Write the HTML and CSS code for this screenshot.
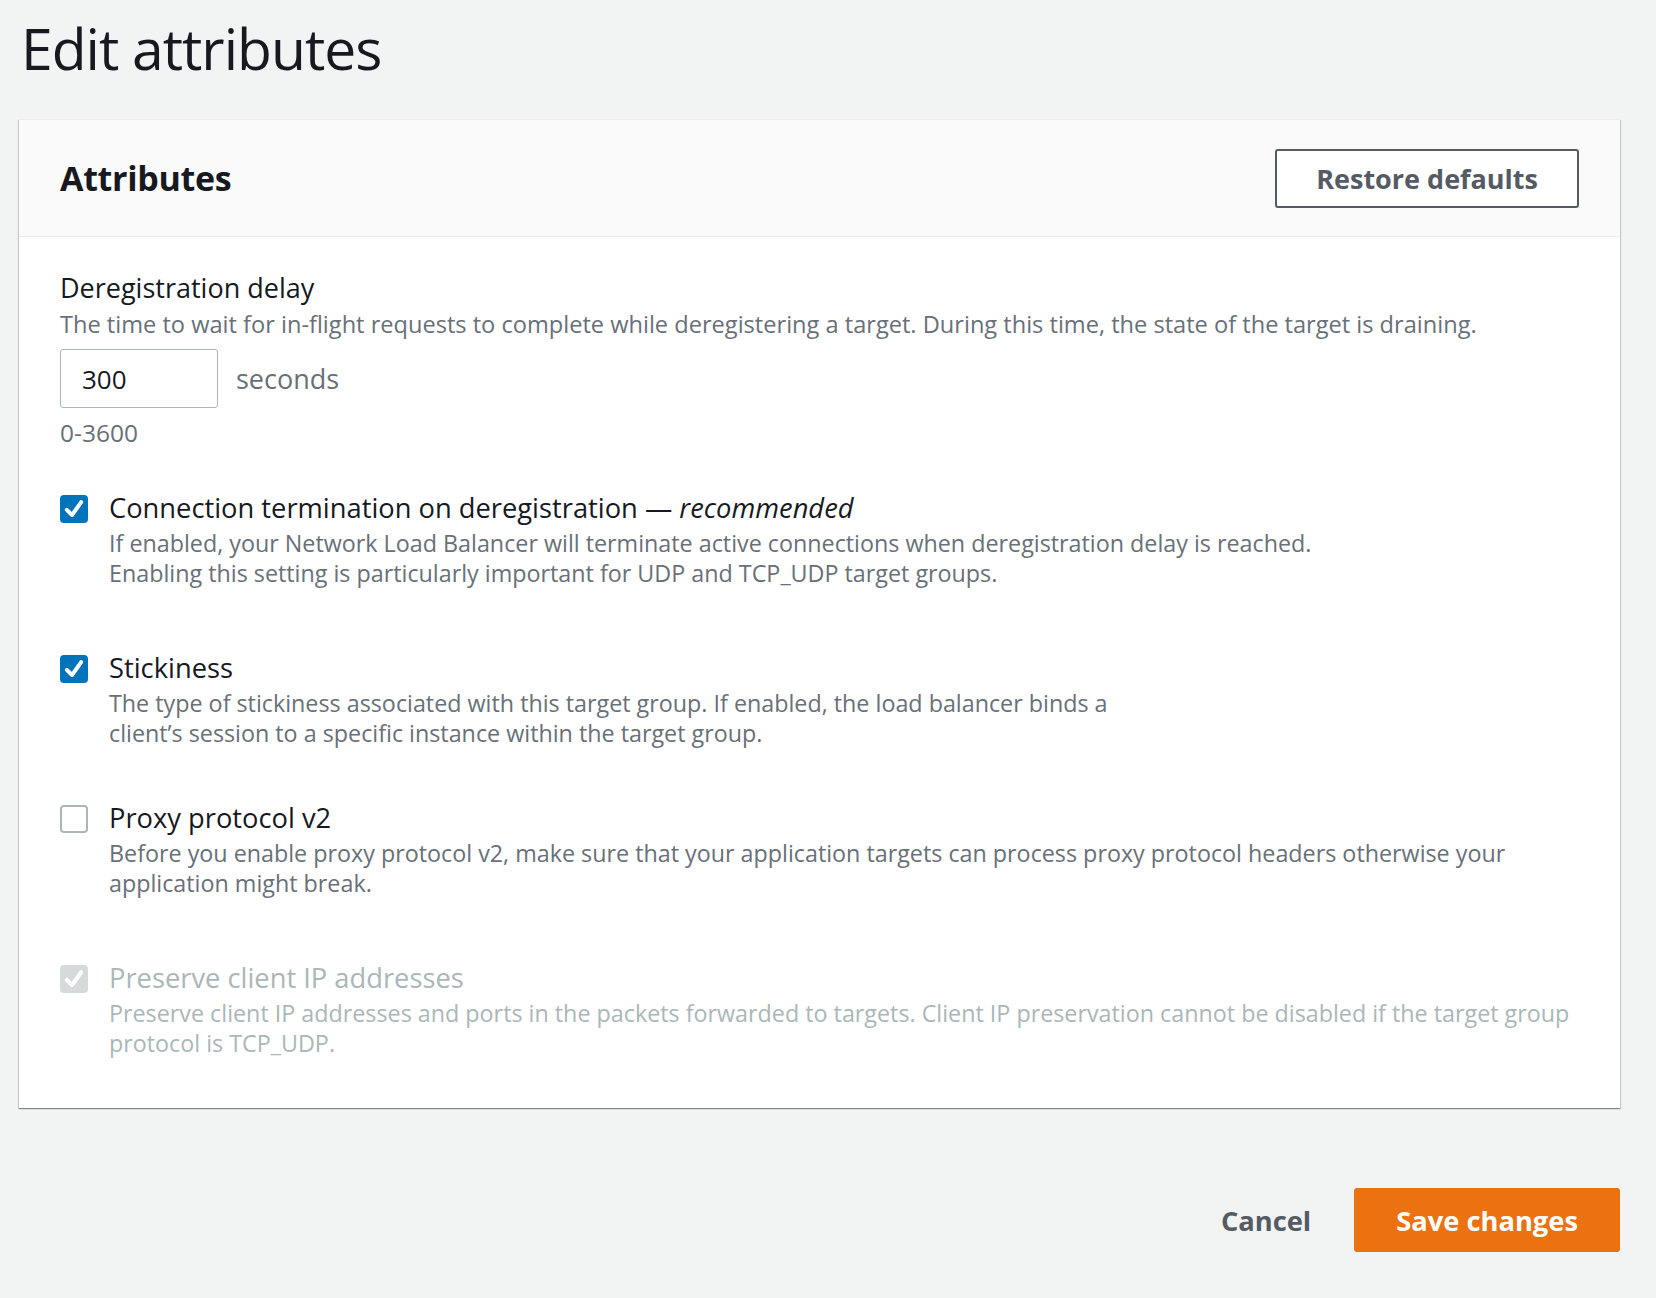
FILE: index.html
```html
<!DOCTYPE html>
<html>
<head>
  <title>Edit attributes</title>
  <link rel="stylesheet" href="styles.css">
</head>
<body>
  <div class="page">
    <h1>Edit attributes</h1>

    <div class="card">
      <div class="card-header">
        <h2>Attributes</h2>
        <button class="btn-normal">Restore defaults</button>
      </div>

      <div class="card-body">
        <div class="field">
          <div class="field-label">Deregistration delay</div>
          <div class="field-desc">The time to wait for in-flight requests to complete while deregistering a target. During this time, the state of the target is draining.</div>
          <div class="field-row">
            <input class="num-input" type="text" value="300">
            <span class="unit">seconds</span>
          </div>
          <div class="field-hint">0-3600</div>
        </div>

        <div class="option">
          <span class="checkbox checked">
            <svg viewBox="0 0 14 14"><polyline points="3.4,7.4 6,10 10.6,3.6"/></svg>
          </span>
          <div class="option-text">
            <div class="option-label">Connection termination on deregistration — <em>recommended</em></div>
            <div class="option-desc">If enabled, your Network Load Balancer will terminate active connections when deregistration delay is reached.<br>Enabling this setting is particularly important for UDP and TCP_UDP target groups.</div>
          </div>
        </div>

        <div class="option">
          <span class="checkbox checked">
            <svg viewBox="0 0 14 14"><polyline points="3.4,7.4 6,10 10.6,3.6"/></svg>
          </span>
          <div class="option-text">
            <div class="option-label">Stickiness</div>
            <div class="option-desc">The type of stickiness associated with this target group. If enabled, the load balancer binds a<br>client’s session to a specific instance within the target group.</div>
          </div>
        </div>

        <div class="option option-tight">
          <span class="checkbox"></span>
          <div class="option-text">
            <div class="option-label">Proxy protocol v2</div>
            <div class="option-desc">Before you enable proxy protocol v2, make sure that your application targets can process proxy protocol headers otherwise your<br>application might break.</div>
          </div>
        </div>

        <div class="option disabled">
          <span class="checkbox checked">
            <svg viewBox="0 0 14 14"><polyline points="3.4,7.4 6,10 10.6,3.6"/></svg>
          </span>
          <div class="option-text">
            <div class="option-label">Preserve client IP addresses</div>
            <div class="option-desc">Preserve client IP addresses and ports in the packets forwarded to targets. Client IP preservation cannot be disabled if the target group<br>protocol is TCP_UDP.</div>
          </div>
        </div>
      </div>
    </div>

    <div class="actions">
      <button class="btn-link">Cancel</button>
      <button class="btn-primary">Save changes</button>
    </div>
  </div>
</body>
</html>
```

FILE: styles.css
```css
body { margin: 0; background: #f2f3f3; font-family: "Open Sans", sans-serif; color: #16191f; }
.page { padding: 13px 36px 40px 19px; }

h1 { margin: 0 0 36px 2px; font-size: 57px; line-height: 70px; font-weight: 400; letter-spacing: -1px; color: #16191f; }

.card { background: #fff; border-top: 1px solid #eaeded; box-shadow: 0 1px 1px 0 rgba(0,28,36,0.3), 1px 1px 1px 0 rgba(0,28,36,0.15), -1px 1px 1px 0 rgba(0,28,36,0.15); }
.card-header { display: flex; align-items: center; justify-content: space-between; height: 116px; padding: 0 41px; background: #fafafa; border-bottom: 1px solid #eaeded; }
.card-header h2 { margin: 0; font-size: 34px; font-weight: 700; letter-spacing: -0.3px; }

.btn-normal { height: 59px; padding: 0 39px; background: #fff; border: 2px solid #545b64; border-radius: 3px; color: #545b64; font-family: inherit; font-size: 27px; font-weight: 700; }

.card-body { padding: 36px 41px 50px; }

.field-label { font-size: 27px; line-height: 30px; }
.field-desc { margin-top: 6px; font-size: 23.6px; line-height: 30px; color: #687078; }
.field-row { display: flex; align-items: center; gap: 18px; margin-top: 10px; }
.num-input { box-sizing: border-box; width: 158px; height: 59px; padding: 0 0 0 21px; border: 1px solid #aab7b8; border-radius: 3px; font-family: inherit; font-size: 26px; color: #16191f; }
.unit { font-size: 27px; color: #687078; }
.field-hint { margin-top: 10px; font-size: 24.5px; line-height: 30px; color: #687078; }

.option { display: flex; align-items: flex-start; gap: 21px; margin-top: 65px; }
.field + .option { margin-top: 45px; }
.option-tight { margin-top: 55px; }

.checkbox { flex: none; box-sizing: border-box; width: 28px; height: 28px; margin-top: 2px; border: 2px solid #aab7b8; border-radius: 4px; background: #fff; }
.checkbox svg { display: block; width: 100%; height: 100%; fill: none; stroke: #fff; stroke-width: 2; stroke-linecap: round; stroke-linejoin: round; }
.checkbox.checked { border: none; background: #0073bb; }

.option-label { font-size: 27.3px; line-height: 30px; white-space: nowrap; }
.option-desc { margin-top: 5px; font-size: 23.3px; line-height: 30px; color: #687078; white-space: nowrap; }

.disabled .checkbox.checked { background: #d5dbdb; }
.disabled .option-label, .disabled .option-desc { color: #aab7b8; }

.actions { display: flex; justify-content: flex-end; align-items: center; margin-top: 80px; }
.btn-link { height: 64px; padding: 0 20px; margin-right: 23px; background: none; border: none; color: #545b64; font-family: inherit; font-size: 27.3px; font-weight: 700; }
.btn-primary { height: 64px; padding: 0 42px; background: #ec7211; border: none; border-radius: 3px; color: #fff; font-family: inherit; font-size: 27.3px; font-weight: 700; }
```
